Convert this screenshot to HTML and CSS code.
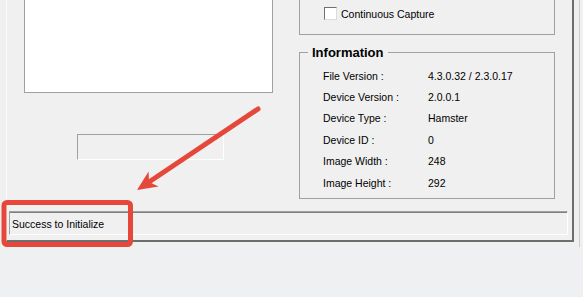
FILE: index.html
```html
<!DOCTYPE html>
<html lang="en">
<head>
    <meta charset="UTF-8">
    <meta name="viewport" content="width=device-width, initial-scale=1.0">
    <title>Fingerprint Scanner Demo</title>
    <link rel="stylesheet" href="styles.css">
</head>
<body>
    <div class="frame">
        <div class="window">
            <div class="main">
                <div class="left-col">
                    <div class="image-box"></div>
                    <div class="quality-box"></div>
                </div>
                <div class="right-col">
                    <div class="capture-group">
                        <label class="check-row"><span class="checkbox"></span>Continuous Capture</label>
                    </div>
                    <fieldset class="info-group">
                        <legend>Information</legend>
                        <div class="info-grid">
                            <span>File Version :</span><span>4.3.0.32 / 2.3.0.17</span>
                            <span>Device Version :</span><span>2.0.0.1</span>
                            <span>Device Type :</span><span>Hamster</span>
                            <span>Device ID :</span><span>0</span>
                            <span>Image Width :</span><span>248</span>
                            <span>Image Height :</span><span>292</span>
                        </div>
                    </fieldset>
                </div>
            </div>
            <div class="status-bar">Success to Initialize</div>
        </div>
    </div>

    <!-- red annotation drawn over the screenshot -->
    <svg class="annotation" width="583" height="297" viewBox="0 0 583 297">
        <rect x="4" y="202.5" width="126.5" height="42" rx="3" fill="none" stroke="#e5483b" stroke-width="5"/>
        <line x1="258" y1="109" x2="149" y2="182" stroke="#e5483b" stroke-width="5" stroke-linecap="round"/>
        <polygon points="137,190 148.6,171.4 149,182 158.6,186.4" fill="#e5483b"/>
    </svg>
</body>
</html>
```

FILE: styles.css
```css
body {
    margin: 0;
    width: 583px;
    height: 297px;
    overflow: hidden;
    position: relative;
    background-color: #eef0f1;
    font-family: "Liberation Sans", Arial, sans-serif;
    font-size: 10.5px;
    color: #000;
}

.frame {
    width: 580px;
    height: 247px;
    box-sizing: border-box;
    padding-left: 6px;
    border-right: 1px solid #cdcdcd;
    background-color: #eff1f1;
}

.window {
    width: 568px;
    height: 242px;
    box-sizing: border-box;
    border-left: 1px solid #fbfbfb;
    border-right: 2px solid #6e6e6e;
    border-bottom: 2px solid #6e6e6e;
    background-color: #f0f0f0;
    display: flex;
    flex-direction: column;
}

.main {
    display: flex;
    height: 200px;
}

.left-col {
    width: 249px;
    margin-left: 17px;
}

.image-box {
    height: 93px;
    box-sizing: border-box;
    background-color: #fff;
    border: 1px solid #a0a0a0;
    border-top: none;
}

.quality-box {
    width: 147px;
    height: 26px;
    margin: 41px 0 0 53px;
    box-sizing: border-box;
    border: 1px solid;
    border-color: #a0a0a0 #fff #fff #a0a0a0;
}

.right-col {
    width: 256px;
    margin-left: 26px;
}

.capture-group {
    height: 35px;
    box-sizing: border-box;
    border: 1px solid #a0a0a0;
    border-top: none;
    padding: 7px 0 0 24px;
}

.check-row {
    display: flex;
    align-items: center;
    gap: 4px;
    height: 13px;
}

.checkbox {
    width: 13px;
    height: 13px;
    box-sizing: border-box;
    background-color: #fff;
    border: 1px solid;
    border-color: #707070 #dcdcdc #dcdcdc #707070;
}

.info-group {
    margin: 9px 0 0;
    padding: 4px 0 5px 8px;
    border: 1px solid #a0a0a0;
    min-width: 0;
}

.info-group legend {
    padding: 0 4px;
    font-size: 13px;
    font-weight: bold;
    line-height: 17px;
}

.info-grid {
    display: grid;
    grid-template-columns: 105px auto;
    grid-auto-rows: 21.4px;
    align-items: center;
    padding-left: 15px;
}

.status-bar {
    height: 24px;
    margin: 11px 4px 0 2px;
    box-sizing: border-box;
    border: 1px solid;
    border-color: #a0a0a0 #fff #fff #a0a0a0;
    box-shadow: inset 0 1px #808080;
    padding: 1px 0 0 2px;
    line-height: 22px;
}

.annotation {
    position: absolute;
    top: 0;
    left: 0;
    pointer-events: none;
}
```
